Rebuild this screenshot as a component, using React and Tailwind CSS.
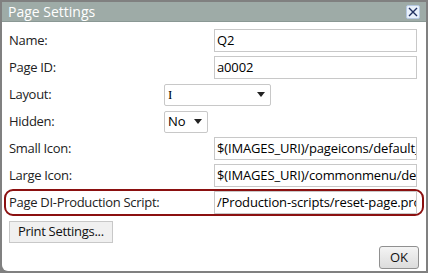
import React from 'react';

const font = { fontFamily: '"Open Sans", "Noto Sans", sans-serif' };

function Row({ label, children, highlight }) {
  return (
    <div
      className={`flex items-center h-[27px] ${
        highlight ? 'border-2 border-[#8b1010] rounded-[9px] -mx-[5px] pl-[3px] pr-[3px]' : ''
      }`}
    >
      <div className="w-[155px] shrink-0 text-[13px] tracking-[-0.3px] text-[#222]">{label}</div>
      {children}
    </div>
  );
}

function TextBox({ value }) {
  return (
    <div className="ml-[50px] w-[203px] h-[23px] border border-[#c8c8c8] bg-white flex items-center px-[2px] overflow-hidden whitespace-nowrap text-[13px] tracking-[-0.15px] text-black">
      {value}
    </div>
  );
}

function Select({ value, width, serif }) {
  return (
    <div
      className={`${width} h-[22px] border border-[#c8c8c8] rounded-[2px] bg-white flex items-center justify-between pl-[3px] pr-[5px] text-[13px] text-black`}
    >
      <span style={serif ? { fontFamily: '"Liberation Serif", serif' } : undefined}>{value}</span>
      <svg width="8" height="5" viewBox="0 0 8 5">
        <path d="M0 0h8L4 5z" fill="#222" />
      </svg>
    </div>
  );
}

export default function App() {
  return (
    <div className="w-[428px] h-[273px] bg-[#808080] p-[2px]" style={font}>
      <div className="w-full h-full bg-white rounded-bl-[6px] flex flex-col">
        <div className="h-[20px] bg-[#9eaba7] flex items-center justify-between pl-[6px] pr-[6px] border-b border-[#8a9894]">
          <span className="text-white text-[14px] leading-none">Page Settings</span>
          <div className="w-[14px] h-[14px] bg-[#e8f0fb] border border-[#b5c8e2] rounded-[2px] flex items-center justify-center">
            <svg width="10" height="10" viewBox="0 0 10 10">
              <path d="M1 1l8 8M9 1l-8 8" stroke="#203060" strokeWidth="1.4" />
            </svg>
          </div>
        </div>
        <div className="flex-1 flex flex-col px-[7px] pt-[5px]">
          <Row label="Name:"><TextBox value="Q2" /></Row>
          <Row label="Page ID:"><TextBox value="a0002" /></Row>
          <Row label="Layout:"><Select value="I" width="w-[107px]" serif /></Row>
          <Row label="Hidden:"><Select value="No" width="w-[44px]" /></Row>
          <Row label="Small Icon:"><TextBox value="$(IMAGES_URI)/pageicons/default_" /></Row>
          <Row label="Large Icon:"><TextBox value="$(IMAGES_URI)/commonmenu/default" /></Row>
          <Row label="Page DI-Production Script:" highlight>
            <TextBox value="/Production-scripts/reset-page.prop" />
          </Row>
          <div className="mt-[2px]">
            <button className="h-[22px] px-[8px] border border-[#c8c8c8] bg-[#f0f0f0] text-[13px] tracking-[-0.3px] text-[#111]">
              Print Settings...
            </button>
          </div>
          <div className="flex justify-end mt-[3px]">
            <button className="w-[40px] h-[23px] border border-[#909090] rounded-[3px] bg-gradient-to-b from-[#f4f4f4] to-[#dcdcdc] text-[13px] text-[#111]">
              OK
            </button>
          </div>
        </div>
      </div>
    </div>
  );
}
